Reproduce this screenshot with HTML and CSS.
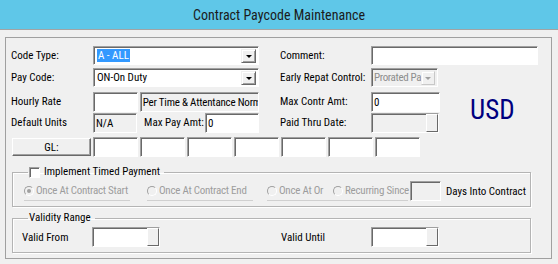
FILE: index.html
```html
<!DOCTYPE html>
<html lang="en">
<head>
    <meta charset="UTF-8">
    <title>Contract Paycode Maintenance</title>
    <link rel="stylesheet" href="styles.css">
</head>
<body>
    <div class="titlebar">Contract Paycode Maintenance</div>
    <div class="panel">
        <!-- top fields -->
        <div class="grid">
            <span class="lbl">Code Type:</span>
            <div class="combo"><span class="val"><span class="sel">A - ALL</span></span><span class="drop"></span></div>
            <span class="lbl rlbl">Comment:</span>
            <div class="field comment"></div>

            <span class="lbl">Pay Code:</span>
            <div class="combo"><span class="val">ON-On Duty</span><span class="drop"></span></div>
            <span class="lbl rlbl">Early Repat Control:</span>
            <div class="combo off"><span class="val">Prorated Pa</span><span class="drop"></span></div>
            <span></span>

            <span class="lbl">Hourly Rate</span>
            <div class="pair">
                <div class="field short"></div>
                <div class="field ro long">Per Time &amp; Attentance Norma</div>
            </div>
            <span class="lbl rlbl">Max Contr Amt:</span>
            <div class="field amt">0</div>
            <div class="usd">USD</div>

            <span class="lbl">Default Units</span>
            <div class="pair">
                <div class="field short ro">N/A</div>
                <span class="lbl mid">Max Pay Amt:</span>
                <div class="field pay">0</div>
            </div>
            <span class="lbl rlbl">Paid Thru Date:</span>
            <div class="field date ro"><span class="dbtn"></span></div>
        </div>

        <div class="glrow">
            <button class="glbtn">GL:</button>
            <div class="field seg"></div>
            <div class="field seg"></div>
            <div class="field seg"></div>
            <div class="field seg"></div>
            <div class="field seg"></div>
            <div class="field seg"></div>
            <div class="field seg"></div>
        </div>

        <!-- Timed payment -->
        <fieldset class="group timed">
            <legend><span class="check"></span>Implement Timed Payment</legend>
            <div class="radios">
                <span class="radio r1"><span class="dot on"></span>Once At Contract Start</span>
                <span class="radio r2"><span class="dot"></span>Once At Contract End</span>
                <span class="radio r3"><span class="dot"></span>Once At Or</span>
                <span class="radio r4"><span class="dot"></span>Recurring Since</span>
                <div class="field days ro"></div>
                <span class="dlbl">Days Into Contract</span>
            </div>
        </fieldset>

        <!-- Validity -->
        <fieldset class="group valid">
            <legend>Validity Range</legend>
            <div class="vrow">
                <span class="lbl vl">Valid From</span>
                <div class="field date white"><span class="dbtn"></span></div>
                <span class="lbl vl2">Valid Until</span>
                <div class="field date white"><span class="dbtn"></span></div>
            </div>
        </fieldset>
    </div>
</body>
</html>
```

FILE: styles.css
```css
* { box-sizing: border-box; }
body {
    margin: 0;
    width: 558px;
    height: 264px;
    overflow: hidden;
    background: #f0f0f0;
    font-family: Roboto, "Liberation Sans", Arial, sans-serif;
    font-stretch: 84%;
    font-size: 11px;
    color: #000;
}
.titlebar {
    height: 30px;
    line-height: 31px;
    background: #5fc7e8;
    border-bottom: 1px solid #a3a3a3;
    text-align: center;
    font-size: 14px;
    font-stretch: 78%;
    color: #1b1b1b;
}
.panel {
    margin: 7px 6px 0 5px;
    height: 222px;
    border: 1px solid #a0a0a0;
    padding: 8px 0 0 5px;
}
.grid {
    display: grid;
    grid-template-columns: 82px 166px 112px 69px 1fr;
    grid-template-rows: 22px 24px 21px 24px;
}
.lbl { line-height: 19px; white-space: nowrap; }
.rlbl { padding-left: 21px; }
.field {
    height: 20px;
    background: #fff;
    border: 1px solid;
    border-color: #a0a0a0 #fff #fff #a0a0a0;
    box-shadow: inset 1px 1px 0 #696969;
    padding: 3px 0 0 2px;
    line-height: 14px;
    white-space: nowrap;
    overflow: hidden;
    position: relative;
}
.field.ro { background: #f0f0f0; }
.comment { grid-column: 4 / span 2; width: 167px; height: 19px; }
.combo {
    height: 19px;
    display: flex;
    background: #fff;
    border: 1px solid;
    border-color: #a0a0a0 #fff #fff #a0a0a0;
    box-shadow: inset 1px 1px 0 #696969;
    padding: 2px 2px 1px 2px;
}
.combo .val { flex: 1; line-height: 14px; padding-left: 1px; white-space: nowrap; overflow: hidden; }
.sel { background: #3399ff; color: #fff; padding: 0 1px; }
.drop {
    width: 15px;
    flex: none;
    background: #f0f0f0;
    border: 1px solid;
    border-color: #f0f0f0 #696969 #696969 #f0f0f0;
    box-shadow: inset 1px 1px 0 #fff, inset -1px -1px 0 #a0a0a0;
    display: flex;
    align-items: center;
    justify-content: center;
}
.drop::after {
    content: "";
    border-left: 3px solid transparent;
    border-right: 3px solid transparent;
    border-top: 3px solid #000;
    margin-top: 1px;
}
.combo.off { background: #f0f0f0; width: 67px; padding-left: 1px; }
.combo.off .val { color: #8d8d8d; padding-left: 1px; letter-spacing: -0.35px; }
.combo.off .drop { width: 14px; border-color: #f0f0f0 #c8c8c8 #c8c8c8 #f0f0f0; box-shadow: inset 1px 1px 0 #fff; }
.combo.off .drop::after { border-top-color: #a0a0a0; }
.pair { display: flex; gap: 2px; }
.short { width: 45px; }
.long { width: 120px; letter-spacing: -0.2px; }
.mid { margin-left: 5px; width: 59px; }
.pay { width: 55px; }
.amt { width: 69px; }
.usd {
    grid-column: 5;
    grid-row: 3 / span 2;
    padding: 0 0 0 30px;
    font-size: 27px;
    font-stretch: 75%;
    line-height: 36px;
    color: #00007f;
}
.date { width: 68px; }
.dbtn {
    position: absolute;
    right: 0;
    top: 0;
    bottom: 0;
    width: 12px;
    background: #f0f0f0;
    border: 1px solid;
    border-color: #fff #696969 #696969 #fff;
}
.white { background: #fff; }
.glrow { display: flex; gap: 2px; }
.glbtn {
    width: 79px;
    height: 18px;
    margin: 1px 0 0 1px;
    padding: 0;
    font: inherit;
    background: #f0f0f0;
    border: 1px solid;
    border-color: #fff #696969 #696969 #fff;
    box-shadow: inset -1px -1px 0 #a0a0a0;
}
.seg { width: 45px; }
.group {
    margin: 8px 0 0 1px;
    width: 519px;
    border: 1px solid #b4b4b4;
    box-shadow: 1px 1px 0 #fff, inset 1px 1px 0 #fff;
    padding: 0 0 4px 9px;
}
.group legend {
    margin-left: 6px;
    padding: 0 4px 0 1px;
    line-height: 14px;
    display: flex;
    align-items: center;
}
.check {
    width: 11px;
    height: 11px;
    background: #fff;
    border: 1px solid;
    border-color: #a0a0a0 #fff #fff #a0a0a0;
    box-shadow: inset 1px 1px 0 #696969;
    margin-right: 4px;
}
.radios { display: flex; align-items: center; height: 22px; margin-top: 1px; }
.radio {
    display: flex;
    align-items: center;
    gap: 2px;
    color: #9d9d9d;
    height: 20px;
    border-bottom: 1px solid #d0d0d0;
    white-space: nowrap;
    letter-spacing: -0.25px;
}
.r1 { width: 106px; margin: 0 17px 0 2px; }
.r2 { width: 106px; margin-right: 14px; }
.r3 { width: 66px; }
.r4 { width: 75px; margin-right: 2px; }
.dot {
    width: 10px;
    height: 10px;
    flex: none;
    border-radius: 50%;
    background: #f0f0f0;
    border: 1px solid;
    border-color: #a0a0a0 #fff #fff #a0a0a0;
    display: flex;
    align-items: center;
    justify-content: center;
}
.dot.on::after {
    content: "";
    width: 4px;
    height: 4px;
    border-radius: 50%;
    background: #a0a0a0;
}
.days { width: 31px; height: 20px; flex: none; }
.dlbl { margin-left: 5px; white-space: nowrap; }
.valid { margin-top: 4px; }
.vrow { display: flex; align-items: center; margin-top: 1px; height: 22px; }
.vl { width: 70px; }
.vl2 { margin-left: 121px; width: 90px; }
```
